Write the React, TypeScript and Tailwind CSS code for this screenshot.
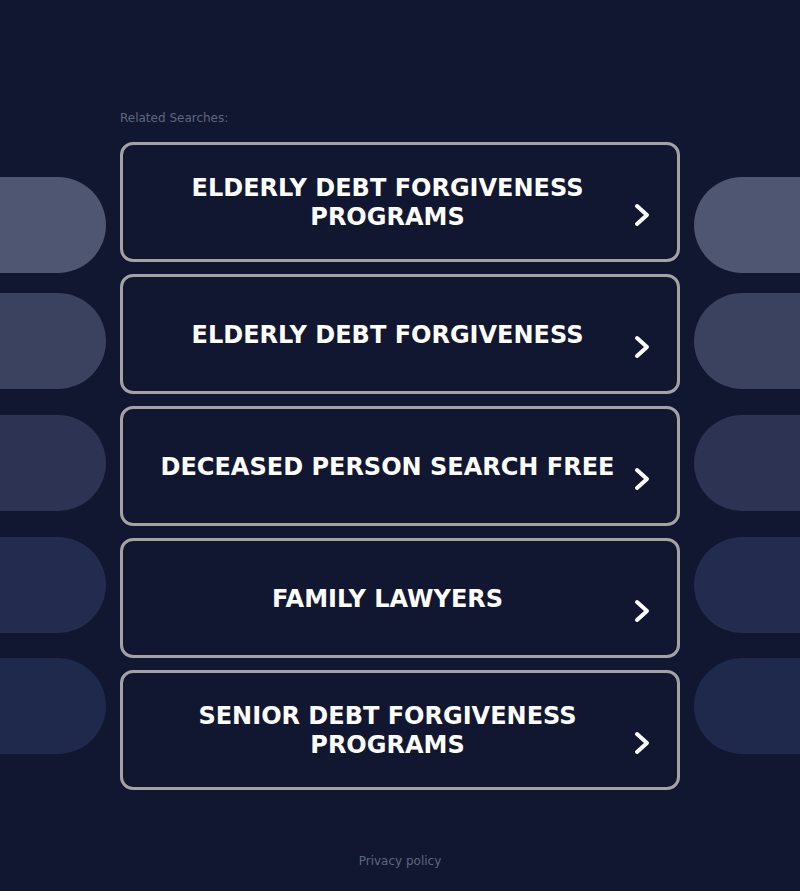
import React from "react";

const searches = [
  "ELDERLY DEBT FORGIVENESS PROGRAMS",
  "ELDERLY DEBT FORGIVENESS",
  "DECEASED PERSON SEARCH FREE",
  "FAMILY LAWYERS",
  "SENIOR DEBT FORGIVENESS PROGRAMS",
];

// Decorative side pills behind the list
const pills = [
  { top: "top-[177px]", color: "bg-[#4e5672]" },
  { top: "top-[293px]", color: "bg-[#3b425f]" },
  { top: "top-[415px]", color: "bg-[#2d3453]" },
  { top: "top-[537px]", color: "bg-[#232c4f]" },
  { top: "top-[658px]", color: "bg-[#1f294c]" },
];

function Chevron() {
  return (
    <svg width="16" height="24" viewBox="0 0 16 24" className="shrink-0 mt-[26px] ml-[6px] mr-[27px]">
      <path
        d="M3 3 L13 12 L3 21"
        fill="none"
        stroke="#ffffff"
        strokeWidth="4"
        strokeLinecap="round"
        strokeLinejoin="round"
      />
    </svg>
  );
}

export default function App() {
  return (
    <div
      className="relative min-h-[891px] w-full overflow-hidden bg-[#111730]"
      style={{ fontFamily: '"DejaVu Sans", Verdana, sans-serif' }}
    >
      {pills.map((p, i) => (
        <React.Fragment key={i}>
          <div className={`absolute left-0 ${p.top} h-[96px] w-[106px] rounded-r-[48px] ${p.color}`} />
          <div className={`absolute left-[694px] ${p.top} h-[96px] w-[106px] rounded-l-[48px] ${p.color}`} />
        </React.Fragment>
      ))}

      <div className="relative mx-auto flex w-[560px] flex-col pt-[110px]">
        <div className="h-[16px] text-[12px] leading-[16px] text-[#5e6680]">Related Searches:</div>
        <div className="mt-[16px] flex flex-col gap-[12px]">
          {searches.map((s) => (
            <a
              key={s}
              href="#"
              className="flex h-[120px] items-center rounded-[13px] border-[3px] border-[#a3a3a6] bg-[#111730] pl-[24px]"
            >
              <span className="mt-[2px] flex-1 text-center text-[24px] font-bold leading-[29px] text-white">
                {s}
              </span>
              <Chevron />
            </a>
          ))}
        </div>
        <div className="mt-[63px] text-center text-[12px] leading-[16px] text-[#5e6680]">Privacy policy</div>
      </div>
    </div>
  );
}
